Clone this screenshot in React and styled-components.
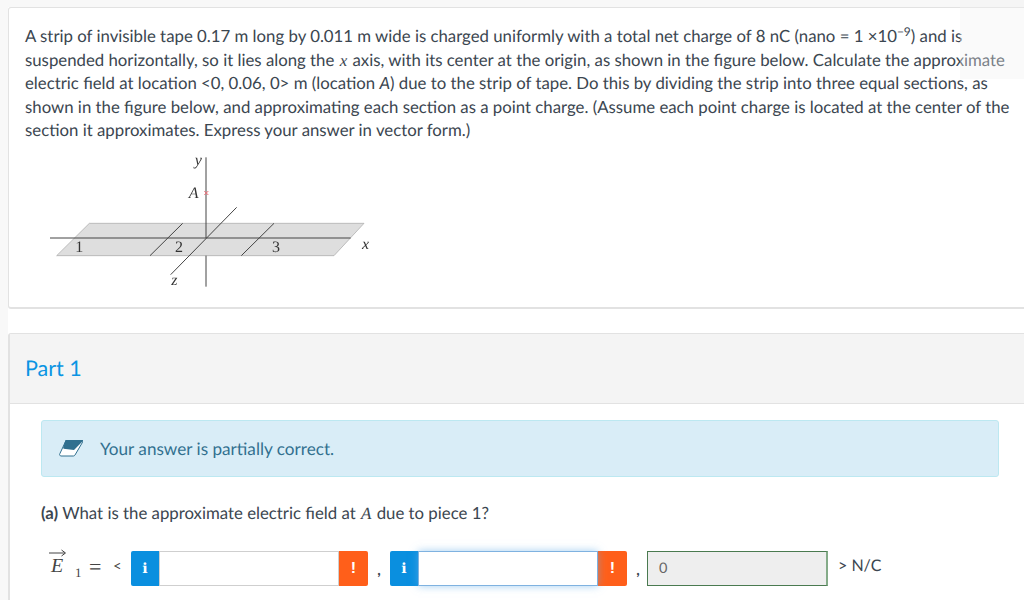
import React from 'react'
import styled, { createGlobalStyle } from 'styled-components'

const GlobalStyle = createGlobalStyle`
  html, body {
    margin: 0;
    padding: 0;
    height: 600px;
    overflow: hidden;
    background: #f8f8f8;
  }
  body {
    font-family: "Lato", "Open Sans", sans-serif;
    font-size: 16px;
    color: #3b4650;
    text-rendering: geometricPrecision;
  }
`

const Page = styled.div`
  width: 1032px;
  height: 600px;
  padding: 7px 0 0 8px;
  box-sizing: border-box;
  overflow: hidden;
`

const Column = styled.div`
  display: flex;
  flex-direction: column;
  gap: 24px;
  background: #fff;
`

const Card = styled.section`
  background: #fff;
  border: 1px solid #e2e2e2;
  border-bottom-width: 2px;
  border-radius: 3px;
`

const QuestionCard = styled(Card)`
  height: 302px;
  box-sizing: border-box;
  padding: 16px 16px 0;
`

const Question = styled.p`
  margin: 0;
  font-size: 16.8px;
  line-height: 23.5px;
  white-space: nowrap;
`

const MathVar = styled.i`
  font-family: "Liberation Serif", serif;
  font-size: 17px;
  line-height: 0;
  margin: 0 1px;
`

const Sup = styled.span`
  position: relative;
  top: -6px;
  font-size: 12px;
  line-height: 0;
`

const Figure = styled.svg`
  display: block;
  width: 340px;
  height: 150px;
  margin: 8px 0 0 15px;
  filter: blur(0.35px);
`

const PartCard = styled(Card)`
  border-bottom: 0;
  border-left-width: 2px;
`

const PartHeader = styled.header`
  height: 70px;
  display: flex;
  align-items: center;
  padding: 0 0 1px 15px;
  box-sizing: border-box;
  background: #f4f4f4;
  border-bottom: 1px solid #e2e2e2;
  color: #0a94e3;
  font-size: 21.5px;
`

const PartBody = styled.div`
  height: 200px;
  padding: 16px 32px 0 31px;
`

const Callout = styled.div`
  height: 57px;
  box-sizing: border-box;
  display: flex;
  align-items: center;
  gap: 17px;
  padding-left: 17px;
  background: #d9edf7;
  border: 1px solid #bce8f1;
  border-radius: 3px;
  color: #31708f;
  font-size: 17.15px;
`

const Prompt = styled.p`
  margin: 24px 0 0;
  font-size: 16.8px;
  line-height: 23px;
`

const AnswerRow = styled.div`
  display: flex;
  align-items: flex-start;
  margin-top: 27px;
  height: 40px;
`

const Vector = styled.span`
  position: relative;
  width: 84px;
  height: 35px;
  flex: none;
  margin-left: 6px;
  font-family: "Liberation Serif", serif;
  color: #444;
`

const VectorLetter = styled.i`
  position: absolute;
  left: 4px;
  top: 4px;
  font-size: 20px;
`

const VectorArrow = styled.svg`
  position: absolute;
  left: 2px;
  top: -2px;
`

const VectorSub = styled.span`
  position: absolute;
  left: 28px;
  top: 14px;
  font-size: 13px;
`

const VectorEquals = styled.span`
  position: absolute;
  left: 42px;
  top: 3px;
  font-size: 22px;
`

const VectorOpen = styled.span`
  position: absolute;
  left: 66px;
  top: 6px;
  font-family: "Lato", sans-serif;
  font-size: 15px;
`

const InputGroup = styled.div`
  display: flex;
  flex: none;
  height: 35px;
`

const Addon = styled.span`
  width: ${({ $kind }) => ($kind === 'info' ? '28px' : '29px')};
  height: 35px;
  flex: none;
  display: flex;
  align-items: center;
  justify-content: center;
  color: #fff;
  font-weight: 700;
  background: ${({ $kind }) => ($kind === 'info' ? '#0a8fdf' : '#ff5f1a')};
  border-radius: ${({ $kind }) => ($kind === 'info' ? '2px 0 0 2px' : '0 2px 2px 0')};
  font-family: ${({ $kind }) => ($kind === 'info' ? '"DejaVu Serif", serif' : '"Liberation Sans", sans-serif')};
  font-size: ${({ $kind }) => ($kind === 'info' ? '14px' : '16px')};
`

const Field = styled.input`
  width: 180px;
  height: 35px;
  box-sizing: border-box;
  margin: 0;
  padding: 0 10px;
  background: #fff;
  outline: none;
  border: 1px solid ${({ $focused }) => ($focused ? '#7fb2e0' : '#cfcfcf')};
  box-shadow: ${({ $focused }) => ($focused ? '0 0 8px rgba(102, 175, 233, 0.6)' : 'none')};
  position: relative;
`

const Comma = styled.span`
  width: 22px;
  flex: none;
  text-align: center;
  font-size: 15px;
  font-weight: 700;
  line-height: 35px;
  padding-top: 2px;
`

const LockedField = styled.div`
  width: 181px;
  height: 35px;
  box-sizing: border-box;
  display: flex;
  align-items: center;
  padding-left: 11px;
  margin-left: -2px;
  background: #eee;
  border: 1px solid #4a7a50;
  border-right: 2px solid #84ab88;
  color: #666;
  font-size: 14.5px;
`

const Unit = styled.span`
  margin-left: 10px;
  font-size: 16px;
  line-height: 30px;
`

const Overlay = styled.div`
  position: absolute;
  top: 0;
  left: 960px;
  width: 64px;
  height: 79px;
  background: rgba(240, 240, 240, 0.35);
  pointer-events: none;
`

const figText = { fontFamily: '"Liberation Serif", serif', fill: '#333' }

function StripFigure() {
  return (
    <Figure viewBox="0 0 1020 450">
      <polygon points="148,220 972,220 882,317 50,317" fill="#dedede" stroke="#a5a5a5" strokeWidth="2" />
      <g stroke="#444" strokeWidth="3" fill="none">
        <line x1="428" y1="220" x2="330" y2="317" />
        <line x1="702" y1="220" x2="604" y2="317" />
        <line x1="30" y1="264" x2="932" y2="264" />
        <line x1="498" y1="22" x2="498" y2="264" />
        <line x1="498" y1="317" x2="498" y2="410" />
        <line x1="590" y1="172" x2="392" y2="374" />
      </g>
      <g stroke="#f06a74" strokeWidth="3">
        <line x1="493" y1="123" x2="505" y2="135" />
        <line x1="505" y1="123" x2="493" y2="135" />
      </g>
      <g style={figText} fontSize="48">
        <text x="106" y="306">1</text>
        <text x="405" y="306">2</text>
        <text x="696" y="306">3</text>
        <text x="446" y="144" fontStyle="italic">A</text>
        <text x="464" y="46" fontStyle="italic">y</text>
        <text x="394" y="406" fontStyle="italic">z</text>
        <text x="966" y="298" fontStyle="italic">x</text>
      </g>
    </Figure>
  )
}

function EraserIcon() {
  return (
    <svg width="24" height="17" viewBox="0 0 24 17">
      <path d="M7 0.5H23a1 1 0 0 1 .6 1.6L16 15a2 2 0 0 1-1.6 1H2a1.5 1.5 0 0 1-1.1-2.4Z" fill="#fff" stroke="#31708f" strokeWidth="1" strokeLinejoin="round" />
      <path d="M6.5 0H23.4a.6 .6 0 0 1 .5 .9L15 10L4.5 8.7L4.2 7.5Z" fill="#31708f" />
    </svg>
  )
}

function AnswerInput({ focused }) {
  return (
    <InputGroup>
      <Addon $kind="info">i</Addon>
      <Field $focused={focused} readOnly aria-label="answer" />
      <Addon $kind="warn">!</Addon>
    </InputGroup>
  )
}

export default function App() {
  return (
    <>
      <GlobalStyle />
      <Page>
        <Column>
          <QuestionCard>
            <Question>
              A strip of invisible tape 0.17 m long by 0.011 m wide is charged uniformly with a total net charge of 8 nC (nano = 1 ×10<Sup>−9</Sup>) and is<br />
              suspended horizontally, so it lies along the <MathVar>x</MathVar> axis, with its center at the origin, as shown in the figure below. Calculate the approximate<br />
              electric field at location &lt;0, 0.06, 0&gt; m (location <i>A</i>) due to the strip of tape. Do this by dividing the strip into three equal sections, as<br />
              shown in the figure below, and approximating each section as a point charge. (Assume each point charge is located at the center of the<br />
              section it approximates. Express your answer in vector form.)
            </Question>
            <StripFigure />
          </QuestionCard>
          <PartCard>
            <PartHeader>Part 1</PartHeader>
            <PartBody>
              <Callout>
                <EraserIcon />
                Your answer is partially correct.
              </Callout>
              <Prompt>
                <b>(a)</b> What is the approximate electric field at <MathVar>A</MathVar> due to piece 1?
              </Prompt>
              <AnswerRow>
                <Vector>
                  <VectorArrow width="18" height="8" viewBox="0 0 18 8">
                    <path d="M0 4H16M12.5 1L16.5 4L12.5 7" fill="none" stroke="#444" strokeWidth="1" />
                  </VectorArrow>
                  <VectorLetter>E</VectorLetter>
                  <VectorSub>1</VectorSub>
                  <VectorEquals>=</VectorEquals>
                  <VectorOpen>&lt;</VectorOpen>
                </Vector>
                <AnswerInput />
                <Comma>,</Comma>
                <AnswerInput focused />
                <Comma>,</Comma>
                <LockedField>0</LockedField>
                <Unit>&gt; N/C</Unit>
              </AnswerRow>
            </PartBody>
          </PartCard>
        </Column>
      </Page>
      <Overlay />
    </>
  )
}
